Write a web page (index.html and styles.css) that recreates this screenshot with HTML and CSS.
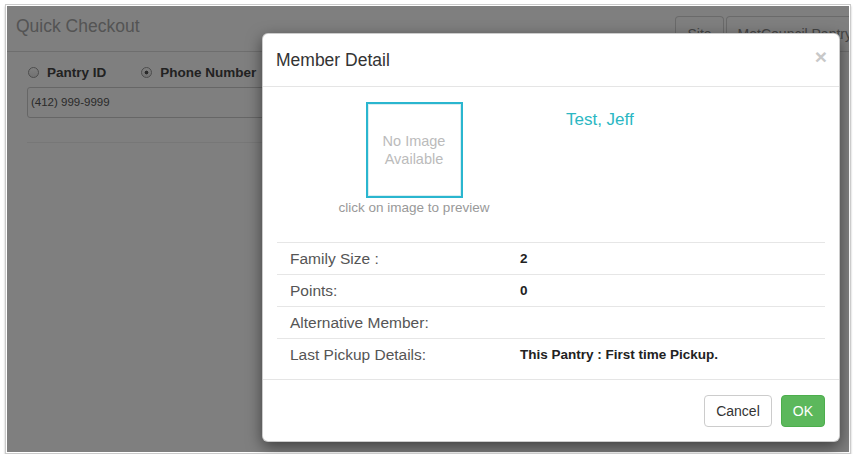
FILE: index.html
```html
<!DOCTYPE html>
<html lang="en">
<head>
  <meta charset="UTF-8" />
  <title>Quick Checkout - Member Detail</title>
  <link rel="stylesheet" href="styles.css">
</head>
<body>
  <div class="shot">
    <!-- page under the dialog -->
    <div class="page">
      <div class="panel-heading">
        <div class="panel-title">Quick Checkout</div>
        <div class="tabs">
          <span class="tab">Site</span>
          <span class="tab">MetCouncil Pantry</span>
        </div>
      </div>
      <div class="panel-body">
        <div class="radios">
          <label class="radio"><span class="circle"></span>Pantry ID</label>
          <label class="radio checked"><span class="circle"></span>Phone Number</label>
        </div>
        <div class="field">(412) 999-9999</div>
        <div class="rule"></div>
      </div>
    </div>

    <div class="backdrop"></div>

    <!-- dialog -->
    <div class="modal">
      <div class="modal-header">
        <div class="modal-title">Member Detail</div>
        <span class="close">&times;</span>
      </div>
      <div class="modal-body">
        <div class="member">
          <div class="photo-col">
            <div class="photo">No Image<br>Available</div>
            <div class="caption">click on image to preview</div>
          </div>
          <div class="name-col">
            <div class="name">Test, Jeff</div>
          </div>
        </div>
        <div class="details">
          <div class="row"><span class="label">Family Size :</span><span class="value">2</span></div>
          <div class="row"><span class="label">Points:</span><span class="value">0</span></div>
          <div class="row"><span class="label">Alternative Member:</span><span class="value"></span></div>
          <div class="row"><span class="label">Last Pickup Details:</span><span class="value">This Pantry : First time Pickup.</span></div>
        </div>
      </div>
      <div class="modal-footer">
        <button class="btn">Cancel</button>
        <button class="btn btn-ok">OK</button>
      </div>
    </div>
  </div>
</body>
</html>
```

FILE: styles.css
```css
body {
  margin: 0;
  background: #fff;
  font-family: 'Liberation Sans', Arial, sans-serif;
}
.shot {
  position: relative;
  width: 842px;
  height: 446px;
  margin: 4px 0 0 5px;
  padding: 1px;
  border: 1px solid #cbcbcb;
  box-shadow: 0 2px 2px rgba(0,0,0,0.25);
  overflow: hidden;
}

/* underlying page */
.page {
  height: 446px;
  background: #fff;
}
.panel-heading {
  display: flex;
  align-items: flex-start;
  height: 45px;
  padding-left: 9px;
  border-bottom: 1px solid #ddd;
  overflow: hidden;
}
.panel-title {
  flex: none;
  padding-top: 10px;
  font-size: 17.5px;
  line-height: 20px;
  color: #a8a8a8;
}
.tabs {
  display: flex;
  gap: 2px;
  flex: none;
  margin: 10px -15px 0 auto;
}
.tab {
  height: 35px;
  padding: 0 11px;
  border: 1px solid #d4d4d4;
  border-bottom: none;
  border-radius: 4px 4px 0 0;
  font-size: 14px;
  line-height: 34px;
  color: #888;
  box-sizing: border-box;
}
.panel-body {
  padding: 10px 20px 0;
}
.radios {
  display: flex;
  gap: 35px;
  height: 20px;
  padding-left: 1px;
}
.radio {
  display: flex;
  align-items: center;
  gap: 8px;
  font-size: 13.5px;
  font-weight: bold;
  color: #444;
}
.circle {
  width: 11px;
  height: 11px;
  border: 1px solid #9a9a9a;
  border-radius: 50%;
  background: linear-gradient(#fff, #e4e4e4);
  box-sizing: border-box;
}
.checked .circle {
  background: radial-gradient(circle, #555 0, #555 1.6px, transparent 2.2px), linear-gradient(#fff, #e4e4e4);
}
.field {
  width: 520px;
  height: 31px;
  margin-top: 5px;
  padding-left: 3px;
  border: 1px solid #ccc;
  border-radius: 3px;
  font-size: 11.5px;
  line-height: 29px;
  color: #555;
  box-sizing: border-box;
}
.rule {
  margin-top: 24px;
  border-top: 1px solid #eee;
}
.backdrop {
  position: absolute;
  inset: 1px;
  background: rgba(0,0,0,0.5);
}

/* dialog */
.modal {
  position: absolute;
  left: 256px;
  top: 28px;
  width: 578px;
  height: 409px;
  background: #fff;
  border: 1px solid rgba(0,0,0,0.2);
  border-radius: 6px;
  box-shadow: 0 5px 15px rgba(0,0,0,0.5);
  box-sizing: border-box;
}
.modal-header {
  display: flex;
  align-items: center;
  justify-content: space-between;
  height: 52px;
  padding: 0 12px 0 13px;
  border-bottom: 1px solid #e5e5e5;
}
.modal-title {
  font-size: 17.5px;
  color: #333;
}
.close {
  margin-top: -6px;
  font-size: 21px;
  font-weight: bold;
  color: #c8c8c8;
}
.modal-body {
  padding: 15px 14px 9px;
}
.member {
  display: grid;
  grid-template-columns: 1fr 1fr;
}
.photo-col {
  display: flex;
  flex-direction: column;
  align-items: center;
}
.photo {
  display: flex;
  align-items: center;
  justify-content: center;
  width: 97px;
  height: 96px;
  border: 2px solid #2ab6cf;
  box-shadow: inset 0 0 0 1px #d9eef2;
  font-size: 14.5px;
  line-height: 18px;
  text-align: center;
  color: #bbb;
  box-sizing: border-box;
}
.caption {
  margin-top: 1px;
  font-size: 13.5px;
  line-height: 18px;
  color: #999;
}
.name-col {
  padding-left: 15px;
}
.name {
  margin-top: 8px;
  font-size: 17px;
  line-height: 20px;
  color: #2bb7c3;
}
.details {
  margin-top: 25px;
}
.row {
  display: grid;
  grid-template-columns: 243px 1fr;
  align-items: center;
  height: 32px;
  border-top: 1px solid #e6e6e6;
  box-sizing: border-box;
}
.label {
  padding-left: 13px;
  font-size: 15.5px;
  color: #555;
}
.value {
  font-size: 13.5px;
  font-weight: bold;
  color: #222;
}
.modal-footer {
  display: flex;
  justify-content: flex-end;
  gap: 9px;
  padding: 15px 14px;
  border-top: 1px solid #e5e5e5;
}
.btn {
  height: 32px;
  padding: 0 11px;
  border: 1px solid #ccc;
  border-radius: 4px;
  background: #fff;
  font-family: inherit;
  font-size: 14px;
  color: #333;
}
.btn-ok {
  background: #5cb85c;
  border-color: #4cae4c;
  color: #fff;
}
```
